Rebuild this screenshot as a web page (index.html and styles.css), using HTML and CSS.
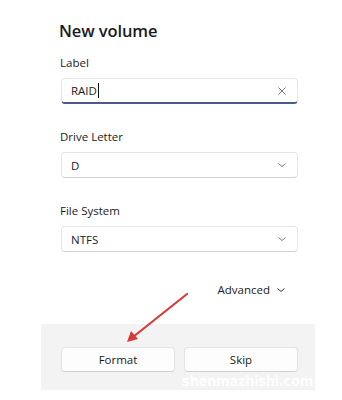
FILE: index.html
```html
<!DOCTYPE html>
<html>
<head>
<meta charset="utf-8">
<link rel="stylesheet" href="styles.css">
</head>
<body>
<div class="dialog">
  <div class="content">
    <h1 class="title">New volume</h1>
    <div class="field">
      <div class="label">Label</div>
      <div class="box focused">
        <span class="value">RAID<span class="caret"></span></span>
        <svg class="icon" width="10" height="10" viewBox="0 0 10 10"><path d="M1.5 1.5 L8.5 8.5 M8.5 1.5 L1.5 8.5" stroke="#7a7a7a" stroke-width="1" fill="none"/></svg>
      </div>
    </div>
    <div class="field">
      <div class="label">Drive Letter</div>
      <div class="box">
        <span class="value">D</span>
        <svg class="icon" width="10" height="10" viewBox="0 0 10 10"><path d="M1.5 3.5 L5 6.5 L8.5 3.5" stroke="#7a7a7a" stroke-width="1" fill="none"/></svg>
      </div>
    </div>
    <div class="field">
      <div class="label">File System</div>
      <div class="box">
        <span class="value">NTFS</span>
        <svg class="icon" width="10" height="10" viewBox="0 0 10 10"><path d="M1.5 3.5 L5 6.5 L8.5 3.5" stroke="#7a7a7a" stroke-width="1" fill="none"/></svg>
      </div>
    </div>
    <div class="advanced">
      <span>Advanced</span>
      <svg width="10" height="10" viewBox="0 0 10 10"><path d="M1.5 3.5 L5 6.5 L8.5 3.5" stroke="#333" stroke-width="1" fill="none"/></svg>
    </div>
  </div>
  <div class="footer">
    <div class="btn">Format</div>
    <div class="btn">Skip</div>
    <div class="watermark">shenmazhishi.com</div>
  </div>
</div>
<svg class="arrow" width="342" height="400" viewBox="0 0 342 400">
  <path d="M187 294 L133 337" stroke="#d83b3b" stroke-width="2.2" fill="none" stroke-linecap="round"/>
  <path d="M127 342 L131 331 L138 339 Z" fill="#d83b3b"/>
</svg>
</body>
</html>
```
FILE: styles.css
```css
html, body {
  margin: 0;
  padding: 0;
  background: #ffffff;
}
body {
  width: 342px;
  height: 400px;
  position: relative;
  overflow: hidden;
  font-family: "Open Sans", "Noto Sans", sans-serif;
  color: #1b1b1b;
}
.dialog {
  margin-left: 41px;
  width: 274px;
  display: flex;
  flex-direction: column;
}
.content {
  padding: 20px 17px 0 20px;
  display: flex;
  flex-direction: column;
}
.title {
  margin: 0 0 0 -2px;
  font-size: 16.5px;
  font-weight: 600;
  line-height: 22px;
  height: 22px;
  letter-spacing: -0.1px;
}
.field {
  display: flex;
  flex-direction: column;
}
.field + .field {
  margin-top: 25px;
}
.title + .field {
  margin-top: 13px;
}
.label {
  font-size: 11.5px;
  line-height: 16px;
  height: 16px;
  margin-bottom: 7px;
  margin-left: -1px;
}
.box {
  height: 24px;
  border: 1px solid #e6e6e6;
  border-bottom-color: #d2d2d2;
  border-radius: 4px;
  background: #ffffff;
  display: flex;
  align-items: center;
  justify-content: space-between;
  padding: 0 10px 0 9px;
  font-size: 11.5px;
}
.box.focused {
  border-bottom: 2px solid #4e5a8e;
  height: 23px;
}
.value {
  display: flex;
  align-items: center;
}
.caret {
  display: inline-block;
  width: 1px;
  height: 15px;
  background: #111;
  margin-left: 1px;
}
.icon {
  display: block;
}
.advanced {
  margin-top: 30px;
  align-self: flex-end;
  margin-right: 12px;
  display: flex;
  align-items: center;
  gap: 6px;
  font-size: 11.5px;
  line-height: 16px;
}
.advanced svg {
  display: block;
}
.footer {
  margin-top: 26px;
  height: 66px;
  background: #f3f3f3;
  display: flex;
  gap: 9px;
  padding: 23px 17px 0 20px;
  box-sizing: border-box;
  position: relative;
}
.btn {
  flex: 1;
  height: 25px;
  box-sizing: border-box;
  background: #fdfdfd;
  border: 1px solid #e3e3e3;
  border-bottom-color: #d0d0d0;
  border-radius: 4px;
  display: flex;
  align-items: center;
  justify-content: center;
  font-size: 11.5px;
}
.watermark {
  position: absolute;
  right: 2px;
  bottom: 0px;
  font-family: "DejaVu Sans Condensed", "DejaVu Sans", sans-serif;
  font-weight: bold;
  font-size: 14.5px;
  line-height: 17px;
  color: rgba(255, 255, 255, 0.9);
  letter-spacing: -0.3px;
  white-space: nowrap;
}
.arrow {
  position: absolute;
  left: 0;
  top: 0;
  pointer-events: none;
}
```
